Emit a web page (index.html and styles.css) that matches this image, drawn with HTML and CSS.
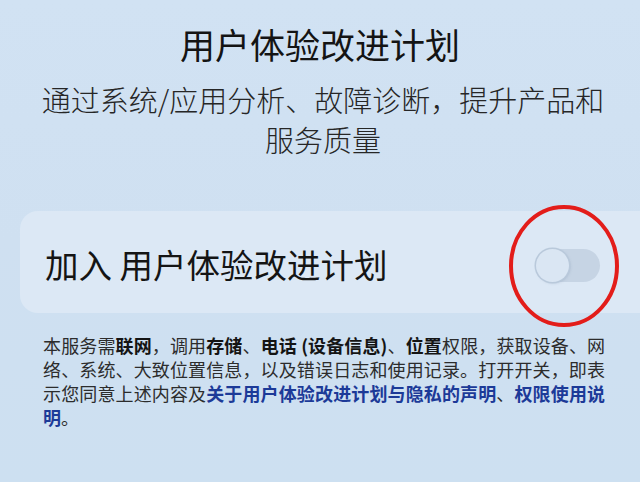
FILE: index.html
```html
<!DOCTYPE html>
<html lang="zh-CN">
<head>
<meta charset="utf-8">
<link rel="stylesheet" href="styles.css">
</head>
<body>
<main class="page">
  <header class="intro">
    <h1 class="title">用户体验改进计划</h1>
    <p class="subtitle">通过系统/应用分析、故障诊断，提升产品和<br>服务质量</p>
  </header>
  <section class="card">
    <span class="card-label">加入 用户体验改进计划</span>
    <span class="toggle"><span class="knob"></span></span>
    <svg class="mark" width="114" height="126" viewBox="0 0 114 126"><ellipse cx="57" cy="63" rx="53" ry="59" fill="none" stroke="#e31d1a" stroke-width="4"/></svg>
  </section>
  <p class="notice">本服务需<b>联网</b>，调用<b>存储</b>、<b>电话 (设备信息)</b>、<b>位置</b>权限，获取设备、网络、系统、大致位置信息，以及错误日志和使用记录。打开开关，即表示您同意上述内容及<a class="link">关于用户体验改进计划与隐私的声明</a>、<a class="link">权限使用说明</a>。</p>
</main>
</body>
</html>
```
FILE: styles.css
```css
html, body {
  margin: 0;
  padding: 0;
}
body {
  width: 640px;
  height: 482px;
  overflow: hidden;
  background: linear-gradient(180deg, #d1e2f3 0%, #cfe0f1 50%, #cde0f1 100%);
  font-family: "Noto Sans CJK SC", "Noto Sans", sans-serif;
  color: #161616;
}
.page {
  display: flex;
  flex-direction: column;
}
.intro {
  padding-top: 23px;
  text-align: center;
}
.title {
  margin: 0;
  font-size: 35px;
  line-height: 42px;
  font-weight: 400;
  color: #141414;
}
.subtitle {
  margin: 14px 0 0;
  padding-left: 6px;
  font-size: 29px;
  line-height: 40px;
  font-weight: 300;
  color: #262626;
}
.card {
  position: relative;
  margin: 52px 0 0 20px;
  width: 620px;
  height: 102px;
  box-sizing: border-box;
  padding-left: 25px;
  display: flex;
  align-items: center;
  border-radius: 18px 0 0 18px;
  background: #dce8f5;
}
.card-label {
  font-size: 33.5px;
  line-height: 40px;
  color: #141414;
  margin-top: 4px;
}
.toggle {
  margin-left: auto;
  margin-right: 40px;
  width: 64px;
  height: 33px;
  border-radius: 17px;
  background: #c6d4e4;
  display: flex;
  align-items: center;
  margin-top: 6px;
}
.knob {
  width: 33px;
  height: 33px;
  border-radius: 50%;
  background: #dae6f3;
  box-shadow: 0 0 0 1.5px #b9c9db, 1px 1px 3px rgba(120, 140, 170, 0.4);
}
.mark {
  position: absolute;
  left: 487px;
  top: -8px;
}
.notice {
  margin: 20px 0 0 43px;
  width: 562px;
  font-size: 18px;
  line-height: 24px;
  color: #2c2c2c;
  text-align: justify;
}
.notice b {
  font-weight: 700;
  color: #141414;
}
.link {
  font-weight: 700;
  color: #1c3a98;
}
```
